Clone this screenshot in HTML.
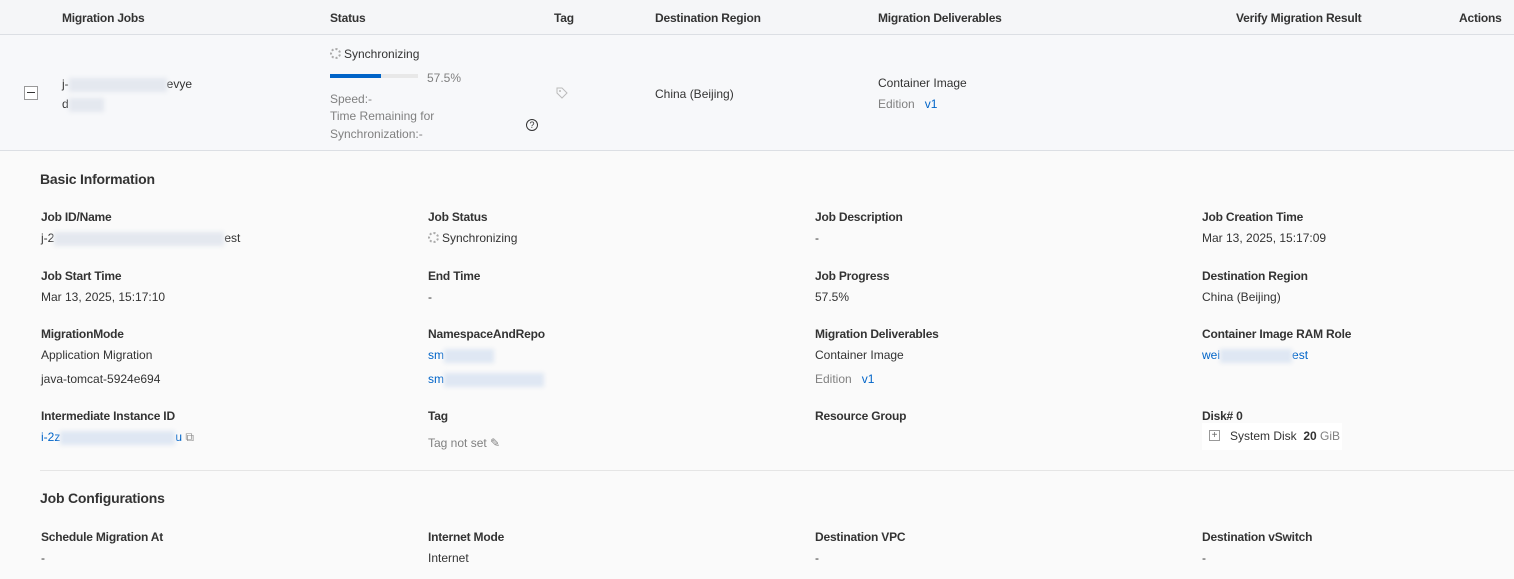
<!DOCTYPE html>
<html><head><style>
*{box-sizing:border-box;margin:0;padding:0}
body{width:1514px;height:579px;overflow:hidden;background:#fafafa;font-family:"Liberation Sans",sans-serif;font-size:12px;color:#333;position:relative}
.a{position:absolute;white-space:nowrap}
.hd{position:absolute;left:0;top:0;width:1514px;height:35px;background:#f5f6f8;border-bottom:1px solid #dcdfe4}
.hd .a{top:11px;font-size:12px;color:#333;font-weight:600;letter-spacing:-0.2px}
.row{position:absolute;left:0;top:35px;width:1514px;height:116px;background:#f7f8fa;border-bottom:1px solid #dcdfe4}
.lbl{font-size:12px;color:#333;font-weight:600;letter-spacing:-0.2px}
.v{font-size:12px;color:#333}
.g{color:#808080}
.bl{color:#0064c8}
.blur{display:inline-block;height:14px;background:#e4e8ef;filter:blur(2px);vertical-align:middle}
.blurb{display:inline-block;height:14px;background:#dfe7f3;filter:blur(2px);vertical-align:middle}
h3{position:absolute;font-size:14px;font-weight:600;color:#333;letter-spacing:-0.2px}
.spin{display:inline-block;width:11px;height:11px;border:2px dotted #aaa;border-radius:50%;vertical-align:-1px;margin-right:3px}
</style></head><body>
<div class="hd">
<span class="a" style="left:62px">Migration Jobs</span>
<span class="a" style="left:330px">Status</span>
<span class="a" style="left:554px">Tag</span>
<span class="a" style="left:655px">Destination Region</span>
<span class="a" style="left:878px">Migration Deliverables</span>
<span class="a" style="left:1236px">Verify Migration Result</span>
<span class="a" style="left:1459px">Actions</span>
</div>
<div class="row"></div>
<div class="a" style="left:24px;top:86px;width:14px;height:14px;border:1px solid #999;background:#fff"><div style="position:absolute;left:2px;top:5px;width:8px;height:1px;background:#333"></div></div>
<span class="a v" style="left:62px;top:77px">j-<span class="blur" style="width:98px"></span>evye</span>
<span class="a v" style="left:62px;top:97px">d<span class="blur" style="width:35px"></span></span>
<span class="a v" style="left:330px;top:47px"><span class="spin"></span>Synchronizing</span>
<div class="a" style="left:330px;top:74px;width:88px;height:4px;background:#e8e8e8"><div style="width:51px;height:4px;background:#0064c8"></div></div>
<span class="a v g" style="left:427px;top:71px">57.5%</span>
<span class="a v g" style="left:330px;top:92px">Speed:-</span>
<span class="a v g" style="left:330px;top:109px">Time Remaining for</span>
<span class="a v g" style="left:330px;top:127px">Synchronization:-</span>
<div class="a" style="left:526px;top:119px;width:12px;height:12px;border:1px solid #333;border-radius:50%;font-size:9px;text-align:center;line-height:10px">?</div>
<svg class="a" style="left:556px;top:87px" width="12" height="12" viewBox="0 0 12 12"><path d="M1 1h5l5 5-5 5-5-5z" fill="none" stroke="#bbb"/><circle cx="4" cy="4" r="1" fill="#bbb"/></svg>
<span class="a v" style="left:655px;top:87px">China (Beijing)</span>
<span class="a v" style="left:878px;top:76px">Container Image</span>
<span class="a v" style="left:878px;top:97px"><span class="g">Edition</span> &nbsp; <span class="bl">v1</span></span>

<h3 style="left:40px;top:171px">Basic Information</h3>
<span class="a lbl" style="left:41px;top:210px">Job ID/Name</span>
<span class="a v" style="left:41px;top:231px">j-2<span class="blur" style="width:170px"></span>est</span>
<span class="a lbl" style="left:428px;top:210px">Job Status</span>
<span class="a v" style="left:428px;top:231px"><span class="spin"></span>Synchronizing</span>
<span class="a lbl" style="left:815px;top:210px">Job Description</span>
<span class="a v" style="left:815px;top:231px">-</span>
<span class="a lbl" style="left:1202px;top:210px">Job Creation Time</span>
<span class="a v" style="left:1202px;top:231px">Mar 13, 2025, 15:17:09</span>

<span class="a lbl" style="left:41px;top:269px">Job Start Time</span>
<span class="a v" style="left:41px;top:290px">Mar 13, 2025, 15:17:10</span>
<span class="a lbl" style="left:428px;top:269px">End Time</span>
<span class="a v" style="left:428px;top:290px">-</span>
<span class="a lbl" style="left:815px;top:269px">Job Progress</span>
<span class="a v" style="left:815px;top:290px">57.5%</span>
<span class="a lbl" style="left:1202px;top:269px">Destination Region</span>
<span class="a v" style="left:1202px;top:290px">China (Beijing)</span>

<span class="a lbl" style="left:41px;top:327px">MigrationMode</span>
<span class="a v" style="left:41px;top:348px">Application Migration</span>
<span class="a v" style="left:41px;top:372px">java-tomcat-5924e694</span>
<span class="a lbl" style="left:428px;top:327px">NamespaceAndRepo</span>
<span class="a v bl" style="left:428px;top:348px">sm<span class="blurb" style="width:50px"></span></span>
<span class="a v bl" style="left:428px;top:372px">sm<span class="blurb" style="width:100px"></span></span>
<span class="a lbl" style="left:815px;top:327px">Migration Deliverables</span>
<span class="a v" style="left:815px;top:348px">Container Image</span>
<span class="a v" style="left:815px;top:372px"><span class="g">Edition</span> &nbsp; <span class="bl">v1</span></span>
<span class="a lbl" style="left:1202px;top:327px">Container Image RAM Role</span>
<span class="a v bl" style="left:1202px;top:348px">wei<span class="blurb" style="width:72px"></span>est</span>

<span class="a lbl" style="left:41px;top:409px">Intermediate Instance ID</span>
<span class="a v bl" style="left:41px;top:430px">i-2z<span class="blurb" style="width:115px"></span>u <span style="color:#888">⧉</span></span>
<span class="a lbl" style="left:428px;top:409px">Tag</span>
<span class="a v g" style="left:428px;top:436px">Tag not set ✎</span>
<span class="a lbl" style="left:815px;top:409px">Resource Group</span>
<span class="a lbl" style="left:1202px;top:409px">Disk# 0</span>
<div class="a" style="left:1202px;top:423px;width:140px;height:27px;background:#fff"></div>
<div class="a" style="left:1209px;top:430px;width:11px;height:11px;border:1px solid #999;font-size:10px;line-height:9px;text-align:center;color:#666">+</div>
<span class="a v" style="left:1230px;top:429px">System Disk &nbsp;<b>20</b> <span class="g">GiB</span></span>

<div class="a" style="left:40px;top:470px;width:1474px;height:1px;background:#e5e5e5"></div>
<h3 style="left:40px;top:490px">Job Configurations</h3>
<span class="a lbl" style="left:41px;top:530px">Schedule Migration At</span>
<span class="a v" style="left:41px;top:551px">-</span>
<span class="a lbl" style="left:428px;top:530px">Internet Mode</span>
<span class="a v" style="left:428px;top:551px">Internet</span>
<span class="a lbl" style="left:815px;top:530px">Destination VPC</span>
<span class="a v" style="left:815px;top:551px">-</span>
<span class="a lbl" style="left:1202px;top:530px">Destination vSwitch</span>
<span class="a v" style="left:1202px;top:551px">-</span>
</body></html>
